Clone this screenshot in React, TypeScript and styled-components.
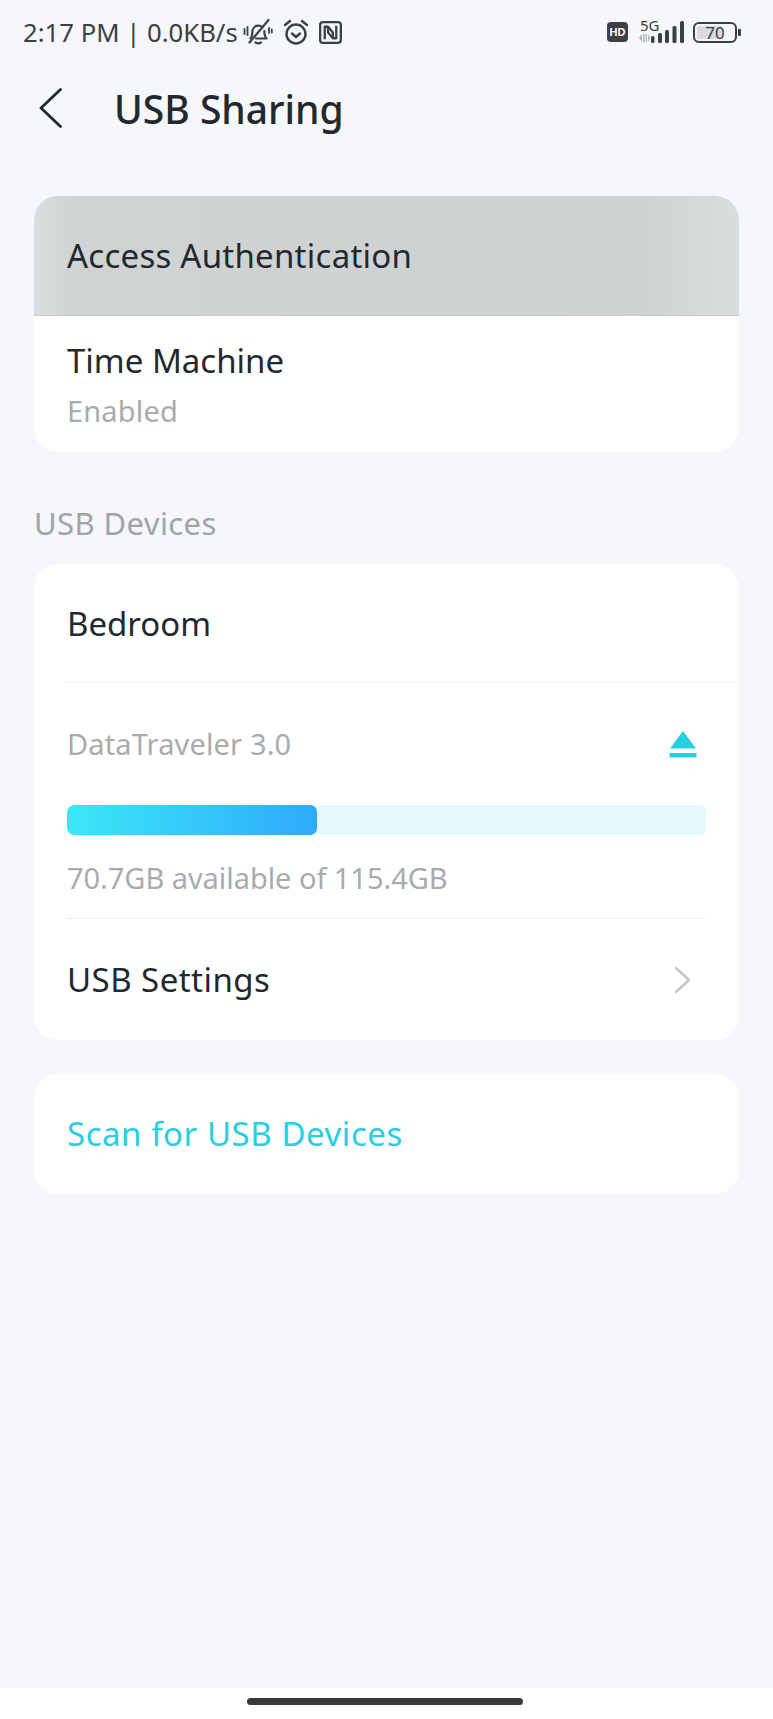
import styled, { createGlobalStyle } from "styled-components";

const GlobalStyle = createGlobalStyle`
  html, body {
    margin: 0;
    padding: 0;
    background: #f5f7fb;
  }
  * {
    box-sizing: border-box;
  }
`;

const App = () => {
  return (
    <>
      <GlobalStyle />
      <Page>
        <StatusBar>
          <StatusLeft>
            <StatusText>2:17 PM | 0.0KB/s</StatusText>
            <BellOffIcon />
            <AlarmIcon />
            <NfcIcon />
          </StatusLeft>
          <StatusRight>
            <HdBadge>HD</HdBadge>
            <NetworkIcon>
              <FiveG>5G</FiveG>
              <DataArrows />
              <SignalIcon />
            </NetworkIcon>
            <Battery>
              <BatteryBody>
                <BatteryFill />
                <BatteryLabel>70</BatteryLabel>
              </BatteryBody>
              <BatteryNub />
            </Battery>
          </StatusRight>
        </StatusBar>

        <Header>
          <BackButton>
            <svg width="24" height="40" viewBox="0 0 24 40" fill="none">
              <path d="M21.500 1.500 2 20l19.500 18.500" stroke="#23282c" strokeWidth="2.800" strokeLinecap="round" strokeLinejoin="round" />
            </svg>
          </BackButton>
          <Title>USB Sharing</Title>
        </Header>

        <Content>
          <Card>
            <PressedRow>
              <RowTitle $spacing={0.25}>Access Authentication</RowTitle>
            </PressedRow>
            <SubRow>
              <RowTitle>Time Machine</RowTitle>
              <MutedText>Enabled</MutedText>
            </SubRow>
          </Card>

          <SectionLabel>USB Devices</SectionLabel>

          <Card>
            <DeviceRow>
              <RowTitle>Bedroom</RowTitle>
            </DeviceRow>
            <DriveBlock>
              <DriveHead>
                <MutedText>DataTraveler 3.0</MutedText>
                <EjectIcon />
              </DriveHead>
              <Track>
                <TrackFill style={{ width: `${(250 / 639) * 100}%` }} />
              </Track>
              <CapacityText>70.7GB available of 115.4GB</CapacityText>
            </DriveBlock>
            <SettingsRow>
              <RowTitle $spacing={0.45}>USB Settings</RowTitle>
              <svg width="18" height="28" viewBox="0 0 18 28" fill="none">
                <path d="M2 2l13 12L2 26" stroke="#c4c6c8" strokeWidth="2.400" strokeLinecap="round" strokeLinejoin="round" />
              </svg>
            </SettingsRow>
          </Card>

          <ScanCard>
            <ScanText>Scan for USB Devices</ScanText>
          </ScanCard>
        </Content>

        <NavBar>
          <HomeHandle />
        </NavBar>
      </Page>
    </>
  );
};

export default App;

const BellOffIcon = () => (
  <StatusIcon width="30" height="28" viewBox="0 0 30 28" fill="none" stroke="#3c4044" strokeWidth="2.200" strokeLinecap="round" strokeLinejoin="round">
    <path d="M8 20.500h-.5c1.500-1.600 1.800-3.400 1.800-6 0-4 2.400-6.800 6-6.800 1.700 0 3.100.6 4.200 1.700M21.300 13c.1 3.200.5 5.700 2.200 7.500H13" />
    <path d="M12.500 24.500c1.800 1 3.800 1 5.500 0" />
    <path d="M6.500 24.500 25.500 2" />
    <path d="M1.500 11v5M4.500 9v8M26 10v5M28.800 11.500v3" strokeWidth="1.800" />
  </StatusIcon>
);

const AlarmIcon = () => (
  <StatusIcon width="26" height="26" viewBox="0 0 26 26" fill="none" stroke="#3c4044" strokeWidth="2.400" strokeLinecap="round" strokeLinejoin="round">
    <circle cx="13" cy="15" r="9.500" />
    <path d="M9 14.500l4 3.500 4-3.500" />
    <path d="M2 6l5-4M24 6l-5-4" />
  </StatusIcon>
);

const NfcIcon = () => (
  <StatusIcon width="23" height="23" viewBox="0 0 24 24" fill="none" stroke="#3c4044" strokeWidth="2.400" strokeLinejoin="round">
    <rect x="1.200" y="1.200" width="21.600" height="21.600" rx="3" />
    <path d="M6 19V6h3.500l5 6v6" />
    <path d="M18 5v13h-3.500l-5-6v-5" />
  </StatusIcon>
);

const DataArrows = () => (
  <ArrowsIcon width="11" height="8" viewBox="0 0 11 8" fill="#b4b6b9">
    <path d="M0 4l3-4v8zM4 0h1.500v8H4zM6.500 0H8v8H6.500zM9 0l2 4-2 4z" />
  </ArrowsIcon>
);

const SignalIcon = () => (
  <svg width="33" height="22" viewBox="0 0 33 22" fill="#3c4044">
    <rect x="0" y="15" width="3.500" height="7" rx="1.500" />
    <rect x="7" y="12" width="4" height="10" rx="1.500" />
    <rect x="14" y="9" width="4" height="13" rx="1.500" />
    <rect x="21.500" y="5" width="4" height="17" rx="1.500" />
    <rect x="29" y="0" width="4" height="22" rx="1.500" />
  </svg>
);

const EjectIcon = () => (
  <svg width="28" height="28" viewBox="0 0 28 28" fill="#26cfe2">
    <path d="M14 1 27 18.500H1z" />
    <rect x="0.500" y="23" width="27" height="4.500" />
  </svg>
);

const Page = styled.div`
  width: 773px;
  height: 1719px;
  display: flex;
  flex-direction: column;
  background: #f5f7fb;
  font-family: "Noto Sans", "Liberation Sans", sans-serif;
  overflow: hidden;
`;

const StatusBar = styled.div`
  height: 64px;
  padding: 0 32px 0 23px;
  display: flex;
  align-items: center;
  justify-content: space-between;
`;

const StatusLeft = styled.div`
  display: flex;
  align-items: center;
`;

const StatusText = styled.span`
  font-size: 25.700px;
  color: #3c4044;
  margin-right: 5px;
  white-space: nowrap;
`;

const StatusIcon = styled.svg`
  margin-right: 10px;
  flex: none;
`;

const StatusRight = styled.div`
  display: flex;
  align-items: center;
`;

const HdBadge = styled.div`
  width: 21px;
  height: 20px;
  border-radius: 4px;
  background: #3c4044;
  color: #fff;
  font-family: "Liberation Sans", sans-serif;
  font-size: 11px;
  font-weight: 700;
  display: flex;
  align-items: center;
  justify-content: center;
  margin-right: 11px;
`;

const NetworkIcon = styled.div`
  position: relative;
  width: 45px;
  height: 22px;
  display: flex;
  justify-content: flex-end;
  margin-right: 9px;
`;

const FiveG = styled.span`
  position: absolute;
  left: 1px;
  top: -4px;
  font-size: 15px;
  line-height: 16px;
  color: #3c4044;
`;

const ArrowsIcon = styled.svg`
  position: absolute;
  left: 0;
  bottom: 1px;
`;

const Battery = styled.div`
  display: flex;
  align-items: center;
  gap: 1px;
`;

const BatteryBody = styled.div`
  position: relative;
  width: 44px;
  height: 21px;
  border: 2px solid #3c4044;
  border-radius: 6px;
  padding: 2px;
`;

const BatteryFill = styled.div`
  width: 70%;
  height: 100%;
  background: #d8dadc;
  border-radius: 2px;
`;

const BatteryLabel = styled.span`
  position: absolute;
  inset: 0;
  display: flex;
  align-items: center;
  justify-content: center;
  font-size: 17px;
  color: #3c4044;
`;

const BatteryNub = styled.div`
  width: 3px;
  height: 7px;
  background: #3c4044;
  border-radius: 0 1px 1px 0;
`;

const Header = styled.div`
  height: 88px;
  display: flex;
  align-items: center;
  padding-left: 39px;
`;

const BackButton = styled.div`
  width: 75px;
  display: flex;
  align-items: center;
`;

const Title = styled.h1`
  margin: 0;
  font-size: 39px;
  font-weight: 500;
  letter-spacing: 0;
  color: #23282c;
`;

const Content = styled.div`
  flex: 1;
  padding: 44px 34px 0;
  display: flex;
  flex-direction: column;
`;

const Card = styled.div`
  background: #fff;
  border-radius: 24px;
  overflow: hidden;
`;

const PressedRow = styled.div`
  height: 120px;
  padding: 0 33px;
  display: flex;
  align-items: center;
  background: linear-gradient(90deg, #dcdfdf 0%, #d0d3d4 5%, #cfd2d3 86%, #dadddd 100%);
  border-bottom: 1px solid #c9cccd;
`;

const SubRow = styled.div`
  height: 136px;
  padding: 21px 33px 0;
  display: flex;
  flex-direction: column;
  gap: 2px;
`;

const RowTitle = styled.div<{ $spacing?: number }>`
  font-size: 33px;
  line-height: 48px;
  letter-spacing: ${(props) => props.$spacing ?? 0}px;
  color: #23282c;
`;

const MutedText = styled.div`
  font-size: 29px;
  line-height: 48px;
  letter-spacing: 0.15px;
  color: #a9abad;
`;

const SectionLabel = styled.div`
  height: 112px;
  padding-top: 47px;
  font-size: 31px;
  line-height: 48px;
  letter-spacing: 0.4px;
  color: #a0a4aa;
`;

const DeviceRow = styled.div`
  height: 119px;
  margin-left: 33px;
  padding-top: 2px;
  display: flex;
  align-items: center;
  border-bottom: 1px solid #eef0f2;
`;

const DriveBlock = styled.div`
  height: 236px;
  margin: 0 33px;
  border-bottom: 1px solid #eceef0;
`;

const DriveHead = styled.div`
  height: 122px;
  display: flex;
  align-items: center;
  justify-content: space-between;
  padding: 0 9px 0 0;
`;

const Track = styled.div`
  height: 30px;
  border-radius: 7px;
  background: #e5f8fd;
  overflow: hidden;
`;

const TrackFill = styled.div`
  height: 100%;
  border-radius: 7px;
  background: linear-gradient(90deg, #3be8f5, #2eaafc);
`;

const CapacityText = styled(MutedText)`
  margin-top: 19px;
  letter-spacing: -0.05px;
`;

const SettingsRow = styled.div`
  height: 121px;
  padding: 0 47px 0 33px;
  display: flex;
  align-items: center;
  justify-content: space-between;
`;

const ScanCard = styled(Card)`
  margin-top: 34px;
  height: 120px;
  padding: 0 33px 2px;
  display: flex;
  align-items: center;
`;

const ScanText = styled.div`
  font-size: 33px;
  letter-spacing: 0.55px;
  color: #26cfe2;
`;

const NavBar = styled.div`
  height: 31px;
  background: #fff;
  display: flex;
  justify-content: center;
  padding: 10px 3px 0 0;
`;

const HomeHandle = styled.div`
  width: 276px;
  height: 7px;
  border-radius: 4px;
  background: #3a3a3c;
`;
